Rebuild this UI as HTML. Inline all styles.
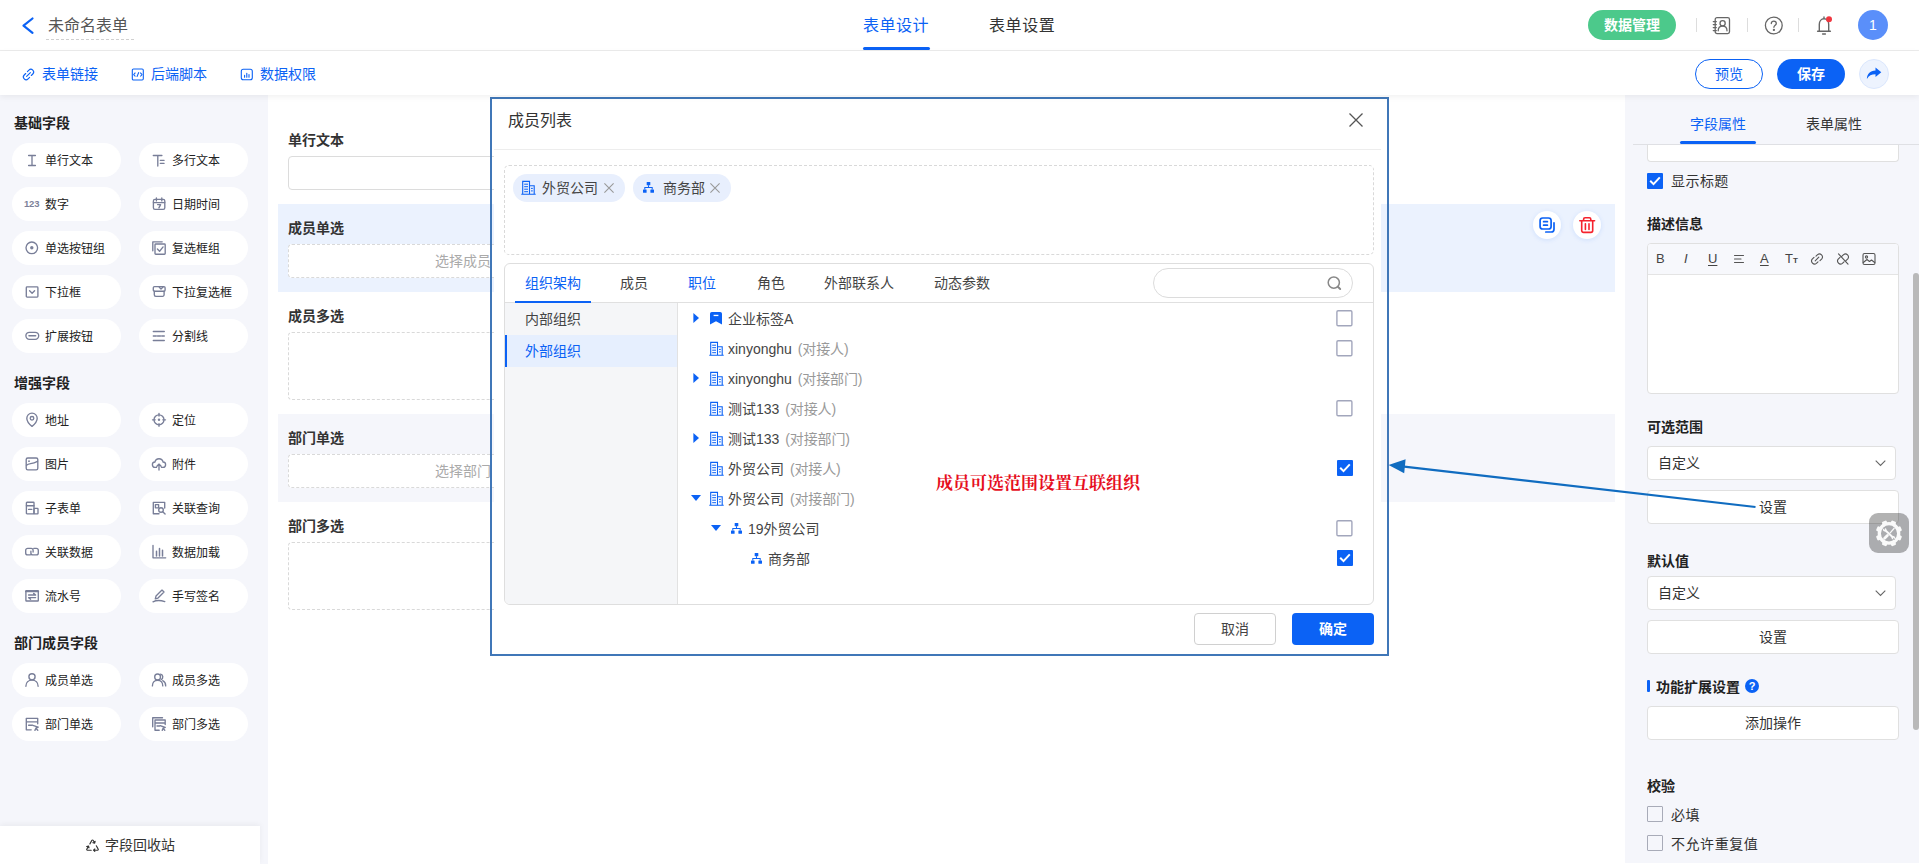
<!DOCTYPE html>
<html lang="zh-CN">
<head>
<meta charset="utf-8">
<title>表单设计</title>
<style>
*{box-sizing:border-box;margin:0;padding:0}
html,body{width:1919px;height:864px;overflow:hidden;background:#fff}
body{font-family:"Liberation Sans","Noto Sans CJK SC",sans-serif;font-size:14px;color:#333;position:relative}
.abs{position:absolute}
svg{display:block;overflow:visible}
/* header */
#hdr{position:absolute;left:0;top:0;width:1919px;height:51px;background:#fff;border-bottom:1px solid #ececec}
#bar{position:absolute;left:0;top:51px;width:1919px;height:44px;background:#fff;box-shadow:0 2px 6px rgba(0,0,0,.06);z-index:3}
#left{position:absolute;left:0;top:95px;width:268px;height:769px;background:#f5f6fb}
#right{position:absolute;left:1625px;top:95px;width:294px;height:768px;background:#f5f6fb}
#canvas{position:absolute;left:268px;top:95px;width:1357px;height:768px;background:#fff}
.t{position:absolute;white-space:nowrap;line-height:20px;height:20px}
.b{font-weight:bold}
.blue{color:#0b62f5}
/* left pills */
.pill{position:absolute;width:109px;height:34px;border-radius:17px;background:#fff;font-size:12px;line-height:34px;color:#222;white-space:nowrap}
.pill span{position:absolute;left:33px;top:1px}
.pill svg{position:absolute;left:13px;top:10px}
.sec{position:absolute;left:14px;font-size:14px;font-weight:bold;color:#222;line-height:20px}
/* form */
.flabel{position:absolute;left:288px;font-size:14px;font-weight:bold;color:#333;line-height:20px}
.dash{position:absolute;left:288px;width:350px;border:1px dashed #d9d9d9;border-radius:4px;background:#fff}
/* right */
.rlabel{position:absolute;left:1647px;font-size:14px;font-weight:bold;color:#222;line-height:20px}
.rbox{position:absolute;left:1647px;width:252px;height:34px;border:1px solid #e0e0e0;border-radius:4px;background:#fff;font-size:14px;line-height:32px;color:#333}
.cb{position:absolute;width:16px;height:16px;border:1px solid #a8abb8;border-radius:1px;background:#fff}
.cbx{position:absolute;width:16px;height:16px;border-radius:1px;background:#0b62f5}
</style>
</head>
<body>
<div id="hdr"></div>
<div id="bar"></div>
<div id="left"></div>
<div id="canvas"></div>
<div id="right"></div>
<!--HDR-->
<svg class="abs" style="left:21px;top:17px" width="14" height="18" viewBox="0 0 14 18"><path d="M11.5 1.5 L2.5 8.7 L11.5 15.8" fill="none" stroke="#0b62f5" stroke-width="2.2" stroke-linecap="round" stroke-linejoin="round"/></svg>
<div class="t" style="left:48px;top:15px;font-size:16px;line-height:22px;height:22px;color:#555">未命名表单</div>
<div class="abs" style="left:46px;top:39px;width:88px;border-top:1px dashed #d0d0d0"></div>
<div class="t" style="left:863px;top:15px;font-size:16px;line-height:22px;height:22px;letter-spacing:.5px;color:#0b62f5">表单设计</div>
<div class="abs" style="left:863px;top:47px;width:67px;height:3px;border-radius:2px;background:#0b62f5"></div>
<div class="t" style="left:989px;top:15px;font-size:16px;line-height:22px;height:22px;letter-spacing:.6px;color:#333">表单设置</div>
<div class="abs" style="left:1588px;top:10px;width:88px;height:30px;border-radius:15px;background:#4cc98b;color:#fff;font-size:14px;font-weight:bold;line-height:30px;text-align:center">数据管理</div>
<div class="abs" style="left:1696px;top:18px;width:1px;height:14px;background:#ddd"></div>
<div class="abs" style="left:1747px;top:18px;width:1px;height:14px;background:#ddd"></div>
<div class="abs" style="left:1798px;top:18px;width:1px;height:14px;background:#ddd"></div>
<svg class="abs" style="left:1712px;top:16px" width="20" height="20" viewBox="0 0 20 20" fill="none" stroke="#666" stroke-width="1.3" stroke-linecap="round" stroke-linejoin="round"><rect x="3.2" y="1.6" width="14.3" height="16" rx="1.8"/><path d="M1.2 5.6h3.2M1.2 8.6h3.2M1.2 11.6h3.2M1.2 14.6h3.2" stroke-width="1.1"/><circle cx="10.6" cy="7.3" r="2.6"/><path d="M6.2 14.8c0-3 1.9-4.6 4.4-4.6s4.4 1.600 4.4 4.600"/></svg>
<svg class="abs" style="left:1764px;top:16px" width="20" height="20" viewBox="0 0 20 20" fill="none" stroke="#666" stroke-width="1.3" stroke-linecap="round" stroke-linejoin="round"><circle cx="9.800" cy="9.500" r="8.400"/><path d="M7.300 7.600c0-1.500 1.100-2.500 2.500-2.500s2.500 1 2.500 2.300c0 1.700-2.400 1.900-2.400 3.900"/><circle cx="9.900" cy="13.900" r=".5" fill="#666"/></svg>
<svg class="abs" style="left:1814px;top:14px" width="22" height="22" viewBox="0 0 22 22" fill="none" stroke="#666" stroke-width="1.4" stroke-linecap="round" stroke-linejoin="round"><path d="M3.600 17.300h12.800M5.300 17.300v-7.100c0-3.100 2-5.400 4.700-5.400s4.700 2.300 4.700 5.400v7.100M8.600 20h2.800M10 4.600V3"/><circle cx="15" cy="5.200" r="3" fill="#f0363f" stroke="none"/></svg>
<div class="abs" style="left:1858px;top:10px;width:30px;height:30px;border-radius:15px;background:#5a8ffa;color:#fff;font-size:14px;line-height:30px;text-align:center">1</div>
<!--BAR-->
<div style="position:absolute;left:0;top:51px;width:1919px;height:45px;z-index:4">
<svg class="abs" style="left:22px;top:17px" width="13" height="13" viewBox="0 0 13 13" fill="none" stroke="#0b62f5" stroke-width="1.100" stroke-linecap="round"><path d="M5.400 3.600l1.500-1.500a2.700 2.700 0 0 1 3.900 3.900l-1.500 1.500M7.600 9.400l-1.500 1.500a2.700 2.700 0 0 1-3.900-3.900l1.500-1.500M4.600 8.400l3.800-3.800"/></svg>
<div class="t blue" style="left:42px;top:13px">表单链接</div>
<svg class="abs" style="left:131px;top:17px" width="13" height="13" viewBox="0 0 13 13" fill="none" stroke="#0b62f5" stroke-width="1.100" stroke-linejoin="round"><rect x="1.300" y="1" width="11" height="11" rx="1.200"/><path d="M4.400 4.700L2.700 6.600l1.700 1.900M5.900 8.900l1.900-4.600M9.300 4.700l1.700 1.900l-1.700 1.900"/></svg>
<div class="t blue" style="left:151px;top:13px">后端脚本</div>
<svg class="abs" style="left:240px;top:17px" width="13" height="13" viewBox="0 0 13 13" fill="none" stroke="#0b62f5" stroke-width="1.100" stroke-linecap="round"><rect x="1.300" y="1.300" width="11" height="10.400" rx="2"/><path d="M4.600 7.200v2M6.800 5.200v4M9 6.500v2.700"/></svg>
<div class="t blue" style="left:260px;top:13px">数据权限</div>
<div class="abs" style="left:1695px;top:8px;width:68px;height:30px;border-radius:15px;border:1px solid #0b62f5;color:#0b62f5;font-size:14px;line-height:28px;text-align:center;background:#fff">预览</div>
<div class="abs" style="left:1777px;top:8px;width:68px;height:30px;border-radius:15px;background:#0b62f5;color:#fff;font-size:14px;font-weight:bold;line-height:30px;text-align:center">保存</div>
<div class="abs" style="left:1859px;top:8px;width:30px;height:30px;border-radius:15px;background:#edf3fe;border:1px solid #dbe7fd"></div>
<svg class="abs" style="left:1866px;top:16px" width="16" height="14" viewBox="0 0 16 14"><path d="M9.500 .6L15.300 5.300L9.500 10V7.200C5.500 7.200 2.800 8.600 .9 12C.9 7.200 4 3.600 9.500 3.400Z" fill="#0b62f5"/></svg>
</div>
<!--LEFT-->
<div class="sec" style="top:113px">基础字段</div>
<div class="pill" style="left:12px;top:143px"><svg width="14" height="14" viewBox="0 0 14 14" fill="none" stroke="#787e98" stroke-width="1.350" stroke-linecap="round" stroke-linejoin="round"><path d="M3.600 2.500h6.800M7 2.500v10M3.600 12.500h6.800"/></svg><span>单行文本</span></div>
<div class="pill" style="left:139px;top:143px"><svg width="14" height="14" viewBox="0 0 14 14" fill="none" stroke="#787e98" stroke-width="1.350" stroke-linecap="round" stroke-linejoin="round"><path d="M1.300 2.500h8.600M5.800 2.500v10.500M8.300 7.300h3.800M8.300 10.300h3.800"/></svg><span>多行文本</span></div>
<div class="pill" style="left:12px;top:187px"><b style="position:absolute;left:12px;top:11px;font-size:9.500px;line-height:12px;letter-spacing:-.2px;color:#7b8199;font-family:'Liberation Sans',sans-serif">123</b><span>数字</span></div>
<div class="pill" style="left:139px;top:187px"><svg width="14" height="14" viewBox="0 0 14 14" fill="none" stroke="#787e98" stroke-width="1.350" stroke-linecap="round" stroke-linejoin="round"><rect x="1.400" y="2.400" width="11.400" height="10" rx="1.600"/><path d="M4.400 .9v3M9.800 .9v3M1.400 5.600h11.400M5.600 7.600h3l-1.700 3.300" /></svg><span>日期时间</span></div>
<div class="pill" style="left:12px;top:231px"><svg width="14" height="14" viewBox="0 0 14 14" fill="none" stroke="#787e98" stroke-width="1.350" stroke-linecap="round" stroke-linejoin="round"><circle cx="6.800" cy="6.800" r="5.800"/><circle cx="6.800" cy="6.800" r="1.700" fill="#7b8199" stroke="none"/></svg><span>单选按钮组</span></div>
<div class="pill" style="left:139px;top:231px"><svg width="14" height="14" viewBox="0 0 14 14" fill="none" stroke="#787e98" stroke-width="1.350" stroke-linecap="round" stroke-linejoin="round"><path d="M.8 9.800V.8h9.400"/><rect x="3" y="3" width="10.200" height="10.200" rx=".8"/><path d="M5.400 8l2.200 2.200l3.500-4.300"/></svg><span>复选框组</span></div>
<div class="pill" style="left:12px;top:275px"><svg width="14" height="14" viewBox="0 0 14 14" fill="none" stroke="#787e98" stroke-width="1.350" stroke-linecap="round" stroke-linejoin="round"><rect x="1.300" y="1.900" width="11.600" height="10.200" rx=".8"/><path d="M4.600 5.700l2.500 2.500l2.500-2.500"/></svg><span>下拉框</span></div>
<div class="pill" style="left:139px;top:275px"><svg width="14" height="14" viewBox="0 0 14 14" fill="none" stroke="#787e98" stroke-width="1.350" stroke-linecap="round" stroke-linejoin="round"><rect x="1.300" y="1.600" width="11.800" height="4.600" rx="1.200"/><path d="M2.300 6.200v3.600a1.500 1.500 0 0 0 1.500 1.500h6.800a1.500 1.500 0 0 0 1.500-1.500v-3.600M7.300 2.300l1.700 1.700l2.300-2.300"/></svg><span>下拉复选框</span></div>
<div class="pill" style="left:12px;top:319px"><svg width="14" height="14" viewBox="0 0 14 14" fill="none" stroke="#787e98" stroke-width="1.350" stroke-linecap="round" stroke-linejoin="round"><rect x=".9" y="3.300" width="12.800" height="7" rx="3.500"/><path d="M4 6.800h6.600" stroke-width="1.600"/></svg><span>扩展按钮</span></div>
<div class="pill" style="left:139px;top:319px"><svg width="14" height="14" viewBox="0 0 14 14" fill="none" stroke="#787e98" stroke-width="1.350" stroke-linecap="round" stroke-linejoin="round"><path d="M1.300 2.500h11M1.300 11.500h11"/><path d="M1.300 7h11" stroke-dasharray="3 1.200"/></svg><span>分割线</span></div>
<div class="sec" style="top:373px">增强字段</div>
<div class="pill" style="left:12px;top:403px"><svg width="14" height="14" viewBox="0 0 14 14" fill="none" stroke="#787e98" stroke-width="1.350" stroke-linecap="round" stroke-linejoin="round"><path d="M7 13.400C7 13.400 1.800 9.300 1.800 5.300a5.200 5.200 0 0 1 10.400 0C12.200 9.300 7 13.400 7 13.400z"/><circle cx="7" cy="5.300" r="1.800"/></svg><span>地址</span></div>
<div class="pill" style="left:139px;top:403px"><svg width="14" height="14" viewBox="0 0 14 14" fill="none" stroke="#787e98" stroke-width="1.350" stroke-linecap="round" stroke-linejoin="round"><circle cx="7" cy="6.800" r="5"/><path d="M7 .3v2.700M7 10.600v2.700M.5 6.800h2.700M10.800 6.800h2.700"/><circle cx="7" cy="6.800" r="1.200" fill="#7b8199" stroke="none"/></svg><span>定位</span></div>
<div class="pill" style="left:12px;top:447px"><svg width="14" height="14" viewBox="0 0 14 14" fill="none" stroke="#787e98" stroke-width="1.350" stroke-linecap="round" stroke-linejoin="round"><rect x="1.200" y="1" width="11.600" height="11.800" rx="1.600"/><path d="M1.500 8.300C4.500 5.500 6 7.800 12.500 4.300"/><circle cx="4" cy="4.200" r=".9" fill="#7b8199" stroke="none"/></svg><span>图片</span></div>
<div class="pill" style="left:139px;top:447px"><svg width="14" height="14" viewBox="0 0 14 14" fill="none" stroke="#787e98" stroke-width="1.350" stroke-linecap="round" stroke-linejoin="round"><path d="M4.500 10.400h-1.200a2.700 2.700 0 0 1-.4-5.400a4.200 4.200 0 0 1 8.200 0a2.700 2.700 0 0 1-.4 5.400h-1.200M7 13v-5.600M4.900 9.200l2.100-2.100l2.100 2.100"/></svg><span>附件</span></div>
<div class="pill" style="left:12px;top:491px"><svg width="14" height="14" viewBox="0 0 14 14" fill="none" stroke="#787e98" stroke-width="1.350" stroke-linecap="round" stroke-linejoin="round"><rect x="1.400" y="1.200" width="7.600" height="11.600" rx=".6"/><path d="M1.400 4.700h7.600M3.600 8.400h3.200"/><rect x="9" y="7.400" width="4" height="5.400" rx=".5"/></svg><span>子表单</span></div>
<div class="pill" style="left:139px;top:491px"><svg width="14" height="14" viewBox="0 0 14 14" fill="none" stroke="#787e98" stroke-width="1.350" stroke-linecap="round" stroke-linejoin="round"><path d="M12.700 7V1.300H1.300v11.400H7"/><rect x="3.400" y="3.600" width="3.200" height="3.200"/><circle cx="9" cy="9" r="2.300"/><path d="M10.700 10.700l2.400 2.400"/></svg><span>关联查询</span></div>
<div class="pill" style="left:12px;top:535px"><svg width="14" height="14" viewBox="0 0 14 14" fill="none" stroke="#787e98" stroke-width="1.350" stroke-linecap="round" stroke-linejoin="round"><path d="M5.200 9.900H2.700a2 2 0 0 1-2-2V5.300a2 2 0 0 1 2-2h3.400a2 2 0 0 1 2 2v1.700M8.800 3.300h2.500a2 2 0 0 1 2 2v2.600a2 2 0 0 1-2 2H7.900a2 2 0 0 1-2-2V6.200"/></svg><span>关联数据</span></div>
<div class="pill" style="left:139px;top:535px"><svg width="14" height="14" viewBox="0 0 14 14" fill="none" stroke="#787e98" stroke-width="1.350" stroke-linecap="round" stroke-linejoin="round"><path d="M1 .5v12.300h12.700"/><path d="M4.500 6.300v4.700M7.500 3.600v7.400M10.500 5.200v5.800" stroke-width="1.500"/></svg><span>数据加载</span></div>
<div class="pill" style="left:12px;top:579px"><svg width="14" height="14" viewBox="0 0 14 14" fill="none" stroke="#787e98" stroke-width="1.350" stroke-linecap="round" stroke-linejoin="round"><rect x=".9" y="1.700" width="12.400" height="10.300" rx=".5"/><path d="M.9 2.300h12.400" stroke-width="1.800"/><path d="M3.600 6h7M8.600 4.400l2 1.600M3.600 8.600h7M3.600 8.600l2 1.600"/></svg><span>流水号</span></div>
<div class="pill" style="left:139px;top:579px"><svg width="14" height="14" viewBox="0 0 14 14" fill="none" stroke="#787e98" stroke-width="1.350" stroke-linecap="round" stroke-linejoin="round"><path d="M3.300 9.800l.7-2.700l6-6l2 2l-6 6zM1 12.800c3.500-1.700 7.500-1.600 11.800-.2"/></svg><span>手写签名</span></div>
<div class="sec" style="top:633px">部门成员字段</div>
<div class="pill" style="left:12px;top:663px"><svg width="14" height="14" viewBox="0 0 14 14" fill="none" stroke="#787e98" stroke-width="1.350" stroke-linecap="round" stroke-linejoin="round"><circle cx="7" cy="3.800" r="3.100"/><path d="M.9 13.300c0-3.700 2.600-6.200 6.100-6.200s6.100 2.500 6.100 6.200"/></svg><span>成员单选</span></div>
<div class="pill" style="left:139px;top:663px"><svg width="14" height="14" viewBox="0 0 14 14" fill="none" stroke="#787e98" stroke-width="1.350" stroke-linecap="round" stroke-linejoin="round"><circle cx="5.600" cy="3.900" r="2.900"/><path d="M.4 12.900c0-3.400 2.200-5.700 5.200-5.700s5.200 2.300 5.200 5.700M8.600 1.200a2.900 2.900 0 0 1 .6 5.400M10.700 7.700c1.800.8 3 2.700 3 5.200"/></svg><span>成员多选</span></div>
<div class="pill" style="left:12px;top:707px"><svg width="14" height="14" viewBox="0 0 14 14" fill="none" stroke="#787e98" stroke-width="1.350" stroke-linecap="round" stroke-linejoin="round"><path d="M6.200 12.800H1.300V1.300h11.400v5.400M1.300 4.800h11.400M3.600 8.200h3.600"/><path d="M7.800 8.300l5.400 1.900l-2.300 1l1.900 2.100M10.900 11.200l-1 2.200z"/></svg><span>部门单选</span></div>
<div class="pill" style="left:139px;top:707px"><svg width="14" height="14" viewBox="0 0 14 14" fill="none" stroke="#787e98" stroke-width="1.350" stroke-linecap="round" stroke-linejoin="round"><path d="M.7 9.800V.7h9.800"/><path d="M7.200 13.200H3V3h10.200v4.500M3 6h10.200M5 9h2.600"/><path d="M8.200 8.700l5 1.800l-2.100.9l1.700 1.900M11.100 11.400l-.9 2z"/></svg><span>部门多选</span></div>
<div class="abs" style="left:0;top:826px;width:260px;height:38px;background:#fff;box-shadow:0 -2px 6px rgba(0,0,0,.05)"></div>
<svg class="abs" style="left:84.500px;top:837.500px" width="15" height="14" viewBox="0 0 15 14" fill="none" stroke="#333" stroke-width="1.150" stroke-linecap="round" stroke-linejoin="round"><path d="M4.900 5.900L6.900 2.300a.7 .7 0 0 1 1.200 0L9.700 5M10.100 3.300l-.4 1.800l-1.800-.4M11.300 7.800l1.900 3.300a.7 .7 0 0 1-.6 1.100H8.600M9.800 11l-1.300 1.200l1.300 1.200M6.200 12.200H2.400a.7 .7 0 0 1-.6-1.100L3.500 8.100M1.700 8.500l1.800-.5l.5 1.800"/></svg>
<div class="t" style="left:105px;top:835px;font-size:14px;color:#333">字段回收站</div>
<!--FORM-->
<div class="flabel" style="top:130px">单行文本</div>
<div class="abs" style="left:288px;top:156px;width:350px;height:34px;border:1px solid #dcdcdc;border-radius:4px;background:#fff"></div>
<div class="abs" style="left:278px;top:204px;width:1337px;height:88px;background:#ebf2fe"></div>
<div class="flabel" style="top:218px">成员单选</div>
<div class="dash" style="top:244px;height:34px"></div>
<div class="t" style="left:435px;top:251px;color:#aaa">选择成员</div>
<div class="abs" style="left:1533px;top:211px;width:28px;height:28px;border-radius:14px;background:#fff;box-shadow:0 1px 5px rgba(11,98,245,.12)"></div>
<svg class="abs" style="left:1539px;top:217px" width="17" height="17" viewBox="0 0 17 17" fill="none" stroke="#0b62f5" stroke-width="1.700" stroke-linecap="round" stroke-linejoin="round"><rect x="1.100" y="1" width="11" height="11" rx="2.600"/><path d="M4.600 4.700h3.800M4.600 8.200h3.800"/><path d="M15 5.800v6.400a2.800 2.800 0 0 1-2.800 2.800H6.800"/></svg>
<div class="abs" style="left:1573px;top:211px;width:28px;height:28px;border-radius:14px;background:#fff;box-shadow:0 1px 5px rgba(11,98,245,.12)"></div>
<svg class="abs" style="left:1579px;top:217px" width="17" height="17" viewBox="0 0 17 17" fill="none" stroke="#f5222d" stroke-width="1.600" stroke-linecap="round" stroke-linejoin="round"><path d="M.8 3.700h14.800M4.600 3.500V2.200a1.500 1.500 0 0 1 1.500-1.500h4.200a1.500 1.500 0 0 1 1.500 1.500v1.300M2.700 4v9.600a1.800 1.800 0 0 0 1.800 1.800h7.400a1.800 1.800 0 0 0 1.800-1.800V4M6.400 6.800v5.600M10 6.800v5.600"/></svg>
<div class="flabel" style="top:306px">成员多选</div>
<div class="dash" style="top:332px;height:68px"></div>
<div class="abs" style="left:278px;top:414px;width:1337px;height:88px;background:#f5f6fb"></div>
<div class="flabel" style="top:428px">部门单选</div>
<div class="dash" style="top:454px;height:34px"></div>
<div class="t" style="left:435px;top:461px;color:#aaa">选择部门</div>
<div class="flabel" style="top:516px">部门多选</div>
<div class="dash" style="top:542px;height:68px"></div>
<!--RIGHT-->
<div class="t" style="left:1690px;top:114px;color:#0b62f5">字段属性</div>
<div class="t" style="left:1806px;top:114px;color:#333">表单属性</div>
<div class="abs" style="left:1633px;top:144px;width:286px;height:1px;background:#dfe0e4"></div>
<div class="abs" style="left:1680px;top:141px;width:76px;height:3px;border-radius:2px;background:#0b62f5"></div>
<div class="abs" style="left:1647px;top:145px;width:252px;height:17px;border:1px solid #e0e0e0;border-top:none;border-radius:0 0 4px 4px;background:#fff"></div>
<div class="cbx" style="left:1647px;top:173px"></div><svg class="abs" style="left:1649px;top:176px" width="12" height="10" viewBox="0 0 12 10" fill="none" stroke="#fff" stroke-width="2"><path d="M1.200 4.800l3.300 3.300L10.800 1.400"/></svg>
<div class="t" style="left:1671px;top:171px;color:#333;letter-spacing:.45px">显示标题</div>
<div class="rlabel" style="top:214px">描述信息</div>
<div class="abs" style="left:1647px;top:243px;width:252px;height:151px;border:1px solid #e0e0e0;border-radius:4px;background:#fff;overflow:hidden"><div class="abs" style="left:0;top:0;width:250px;height:31px;background:#f7f8fc;border-bottom:1px solid #e4e4e4"></div></div>
<div class="t" style="left:1656px;top:249px;font-size:13px;font-family:'Liberation Sans',sans-serif;color:#444">B</div>
<div class="t" style="left:1684px;top:249px;font-size:13px;font-style:italic;font-family:'Liberation Sans',sans-serif;color:#444">I</div>
<div class="t" style="left:1708px;top:249px;font-size:13px;font-family:'Liberation Sans',sans-serif;color:#444;text-decoration:underline;text-underline-offset:2px">U</div>
<svg class="abs" style="left:1732.0px;top:252.0px" width="14" height="14" viewBox="0 0 14 14" fill="none" stroke="#555" stroke-width="1.100" stroke-linecap="round" stroke-linejoin="round" ><path d="M2.500 3.500h9M2.500 7h6.500M2.500 10.500h9"/></svg>
<div class="t" style="left:1760px;top:249px;font-size:13px;font-family:'Liberation Sans',sans-serif;color:#444;text-decoration:underline;text-underline-offset:2px">A</div>
<div class="t" style="left:1785px;top:249px;font-size:13px;font-family:'Liberation Sans',sans-serif;color:#444">T<span style="font-size:8px;font-weight:bold">T</span></div>
<svg class="abs" style="left:1810.0px;top:252.0px" width="14" height="14" viewBox="0 0 14 14" fill="none" stroke="#555" stroke-width="1.100" stroke-linecap="round" stroke-linejoin="round" ><path d="M6 4.200l1.600-1.600a3 3 0 0 1 4.200 4.200l-1.800 1.800M8 9.800l-1.600 1.600a3 3 0 0 1-4.200-4.200l1.800-1.800M5.200 8.800l3.600-3.600"/></svg>
<svg class="abs" style="left:1836.0px;top:252.0px" width="14" height="14" viewBox="0 0 14 14" fill="none" stroke="#555" stroke-width="1.100" stroke-linecap="round" stroke-linejoin="round" ><path d="M6 4.200l1.600-1.600a3 3 0 0 1 4.200 4.200l-1.800 1.800M8 9.800l-1.600 1.600a3 3 0 0 1-4.200-4.200l1.800-1.800M2.500 1.800l9.500 10.400"/></svg>
<svg class="abs" style="left:1862.0px;top:252.0px" width="14" height="14" viewBox="0 0 14 14" fill="none" stroke="#555" stroke-width="1.100" stroke-linecap="round" stroke-linejoin="round" ><rect x="1" y="1.500" width="12" height="11" rx="1.500"/><circle cx="4.500" cy="5" r="1.100"/><path d="M1.300 10.500l3.700-3l2.500 2l2-1.500l3.200 2.500"/></svg>
<div class="rlabel" style="top:417px">可选范围</div>
<div class="abs" style="left:1647px;top:446px;width:249px;height:34px;border:1px solid #e0e0e0;border-radius:4px;background:#fff"></div><div class="t" style="left:1658px;top:453px;color:#333">自定义</div><svg class="abs" style="left:1875px;top:460px" width="11" height="7" viewBox="0 0 11 7" fill="none" stroke="#666" stroke-width="1.100"><path d="M.7 .7l4.800 4.800L10.300 .7"/></svg>
<div class="abs" style="left:1647px;top:490px;width:252px;height:34px;border:1px solid #e0e0e0;border-radius:4px;background:#fff;text-align:center;line-height:32px;color:#333">设置</div>
<div class="rlabel" style="top:551px">默认值</div>
<div class="abs" style="left:1647px;top:576px;width:249px;height:34px;border:1px solid #e0e0e0;border-radius:4px;background:#fff"></div><div class="t" style="left:1658px;top:583px;color:#333">自定义</div><svg class="abs" style="left:1875px;top:590px" width="11" height="7" viewBox="0 0 11 7" fill="none" stroke="#666" stroke-width="1.100"><path d="M.7 .7l4.800 4.800L10.300 .7"/></svg>
<div class="abs" style="left:1647px;top:620px;width:252px;height:34px;border:1px solid #e0e0e0;border-radius:4px;background:#fff;text-align:center;line-height:32px;color:#333">设置</div>
<div class="abs" style="left:1647px;top:680px;width:3px;height:12px;border-radius:1px;background:#0b62f5"></div>
<div class="rlabel" style="left:1656px;top:677px">功能扩展设置</div>
<div class="abs" style="left:1745px;top:679px;width:14px;height:14px;border-radius:7px;background:#0b62f5;color:#fff;font-size:11px;font-weight:bold;line-height:14px;text-align:center;font-family:'Liberation Sans',sans-serif">?</div>
<div class="abs" style="left:1647px;top:706px;width:252px;height:34px;border:1px solid #e0e0e0;border-radius:4px;background:#fff;text-align:center;line-height:32px;color:#333">添加操作</div>
<div class="rlabel" style="top:776px">校验</div>
<div class="cb" style="left:1647px;top:806px;background:transparent"></div><div class="t" style="left:1671px;top:805px;color:#333;letter-spacing:.55px">必填</div>
<div class="cb" style="left:1647px;top:835px;background:transparent"></div><div class="t" style="left:1671px;top:834px;color:#333;letter-spacing:.55px">不允许重复值</div>
<div class="abs" style="left:1869px;top:513px;width:40px;height:40px;border-radius:9px;background:rgba(0,0,0,.3);z-index:8"></div>
<svg class="abs" style="left:1869px;top:513px;z-index:8" width="40" height="40" viewBox="-20 -20 40 40"><g transform="translate(0 .4)" fill="#fafafa"><circle r="9.700" fill="none" stroke="#fafafa" stroke-width="3.300"/><rect x="-2.500" y="-13.200" width="5" height="3.600" rx="1.200" transform="rotate(22.5)"/><rect x="-2.500" y="-13.200" width="5" height="3.600" rx="1.200" transform="rotate(67.5)"/><rect x="-2.500" y="-13.200" width="5" height="3.600" rx="1.200" transform="rotate(112.5)"/><rect x="-2.500" y="-13.200" width="5" height="3.600" rx="1.200" transform="rotate(157.5)"/><rect x="-2.500" y="-13.200" width="5" height="3.600" rx="1.200" transform="rotate(202.5)"/><rect x="-2.500" y="-13.200" width="5" height="3.600" rx="1.200" transform="rotate(247.5)"/><rect x="-2.500" y="-13.200" width="5" height="3.600" rx="1.200" transform="rotate(292.5)"/><rect x="-2.500" y="-13.200" width="5" height="3.600" rx="1.200" transform="rotate(337.5)"/><path d="M-4 -3.400L4 4" stroke="#fafafa" stroke-width="2" fill="none"/><circle cx="-4.300" cy="-3.700" r="1.800"/><circle cx="4.300" cy="4.300" r="1.800"/><path d="M-6.300 -5.700l2.100 .1l.1 2.100z M6.300 6.300l-2.100-.1l-.1-2.100z" fill="#a9a9ab"/><path d="M5.400 -5.400L1 -.2" stroke="#fafafa" stroke-width="1.200" fill="none"/><path d="M-1.600 2L-4.400 4.800" stroke="#fafafa" stroke-width="2.800" stroke-linecap="round" fill="none"/></g></svg>
<div class="abs" style="left:1913px;top:273px;width:6px;height:457px;border-radius:3px;background:#b9b9b9"></div>
<!--MODAL-->
<div class="abs" style="left:494px;top:99px;width:887px;height:555px;background:#fff"></div>
<div class="t" style="left:508px;top:109px;font-size:16px;line-height:24px;height:24px;color:#333">成员列表</div>
<svg class="abs" style="left:1349px;top:113px" width="14" height="14" viewBox="0 0 14 14" fill="none" stroke="#555" stroke-width="1.300"><path d="M.5 .5l13 13M13.500 .5l-13 13"/></svg>
<div class="abs" style="left:494px;top:149px;width:887px;height:1px;background:#ededed"></div>
<div class="abs" style="left:504px;top:165px;width:870px;height:90px;border:1px dashed #d9d9d9;border-radius:5px"></div>
<div class="abs" style="left:513px;top:174px;width:112px;height:28px;border-radius:14px;background:#e8effd"></div>
<svg class="abs" style="left:521px;top:180px" width="15" height="15" viewBox="0 0 15 15" fill="none" stroke="#0b62f5" stroke-width="1.100"><path d="M.3 14.200h14.400M1.700 14.200V1.400h6.800v12.800M8.500 5.800h4.700v8.400"/><path d="M3.200 4.200h3.800M3.200 6.700h3.800M3.200 9.200h3.800M3.200 11.700h3.800M10 8.400h1.800M10 10.900h1.800" stroke-width="1"/></svg>
<div class="t" style="left:542px;top:178px;color:#444">外贸公司</div>
<svg class="abs" style="left:604px;top:183px" width="10" height="10" viewBox="0 0 10 10" fill="none" stroke="#999" stroke-width="1.100"><path d="M.4 .4l9.200 9.200M9.600 .4L.4 9.600"/></svg>
<div class="abs" style="left:633px;top:174px;width:98px;height:28px;border-radius:14px;background:#e8effd"></div>
<svg class="abs" style="left:643px;top:182px" width="11" height="11" viewBox="0 0 11 11" fill="#0b62f5"><rect x="3.700" y="0" width="3.600" height="3.300" rx=".5"/><rect x="0" y="7.400" width="3.600" height="3.400" rx=".5"/><rect x="7.400" y="7.400" width="3.600" height="3.400" rx=".5"/><path d="M5 3.300h1v1.800h3.700v2.300h-1V6.100H2.300v1.300h-1V5.100H5z"/></svg>
<div class="t" style="left:663px;top:178px;color:#444">商务部</div>
<svg class="abs" style="left:710px;top:183px" width="10" height="10" viewBox="0 0 10 10" fill="none" stroke="#999" stroke-width="1.100"><path d="M.4 .4l9.200 9.200M9.600 .4L.4 9.600"/></svg>
<div class="abs" style="left:504px;top:263px;width:870px;height:342px;border:1px solid #dedede;border-radius:6px;background:#fff;overflow:hidden"><div class="abs" style="left:0;top:39px;width:173px;height:302px;background:#f5f6f8;border-right:1px solid #e2e2e2"></div><div class="abs" style="left:0;top:38px;width:870px;height:1px;background:#e0e0e0"></div><div class="abs" style="left:0;top:71px;width:172px;height:32px;background:#e6effe"></div><div class="abs" style="left:0;top:71px;width:2px;height:32px;background:#0b62f5"></div></div>
<div class="t" style="left:525px;top:273px;color:#0b62f5">组织架构</div>
<div class="t" style="left:620px;top:273px;color:#444">成员</div>
<div class="t" style="left:688px;top:273px;color:#0b62f5">职位</div>
<div class="t" style="left:757px;top:273px;color:#444">角色</div>
<div class="t" style="left:824px;top:273px;color:#444">外部联系人</div>
<div class="t" style="left:934px;top:273px;color:#444">动态参数</div>
<div class="abs" style="left:515px;top:301px;width:76px;height:2px;background:#0b62f5"></div>
<div class="abs" style="left:1153px;top:268px;width:200px;height:30px;border:1px solid #dcdcdc;border-radius:15px;background:#fff"></div>
<svg class="abs" style="left:1326px;top:275px" width="16" height="16" viewBox="0 0 16 16" fill="none" stroke="#888" stroke-width="1.500" stroke-linecap="round"><circle cx="7.800" cy="7.600" r="5.600"/><path d="M11.800 11.800l2.400 2.200" stroke-width="1.900"/></svg>
<div class="t" style="left:525px;top:309px;color:#444">内部组织</div>
<div class="t" style="left:525px;top:341px;color:#0b62f5">外部组织</div>
<svg class="abs" style="left:693px;top:313px" width="6" height="10" viewBox="0 0 6 10"><path d="M.4 0L6 5L.4 10z" fill="#0b62f5"/></svg>
<svg class="abs" style="left:710px;top:312px" width="12" height="13" viewBox="0 0 12 13"><path d="M1.800 0h8.400a1.800 1.800 0 0 1 1.800 1.800V12.600L6 9.300L0 12.600V1.800A1.800 1.800 0 0 1 1.800 0z" fill="#0b62f5"/><rect x="3.600" y="2.800" width="4.800" height="1.300" fill="#fff"/></svg>
<div class="t" style="left:728px;top:309px;color:#444">企业标签A</div>
<svg class="abs" style="left:1335px;top:309px" width="19" height="19" viewBox="0 0 19 19"><rect x="1.900" y="1.700" width="15" height="15" rx="1.200" fill="#fff" stroke="#a2a6bc" stroke-width="1.400"/></svg>
<svg class="abs" style="left:709px;top:341px" width="15" height="15" viewBox="0 0 15 15" fill="none" stroke="#0b62f5" stroke-width="1.100"><path d="M.3 14.200h14.400M1.700 14.200V1.400h6.800v12.800M8.500 5.800h4.700v8.400"/><path d="M3.200 4.200h3.800M3.200 6.700h3.800M3.200 9.200h3.800M3.200 11.700h3.800M10 8.400h1.800M10 10.900h1.800" stroke-width="1"/></svg>
<div class="t" style="left:728px;top:339px;color:#444">xinyonghu<span style="color:#999;margin-left:6px;letter-spacing:-.15px">(对接人)</span></div>
<svg class="abs" style="left:1335px;top:339px" width="19" height="19" viewBox="0 0 19 19"><rect x="1.900" y="1.700" width="15" height="15" rx="1.200" fill="#fff" stroke="#a2a6bc" stroke-width="1.400"/></svg>
<svg class="abs" style="left:693px;top:373px" width="6" height="10" viewBox="0 0 6 10"><path d="M.4 0L6 5L.4 10z" fill="#0b62f5"/></svg>
<svg class="abs" style="left:709px;top:371px" width="15" height="15" viewBox="0 0 15 15" fill="none" stroke="#0b62f5" stroke-width="1.100"><path d="M.3 14.200h14.400M1.700 14.200V1.400h6.800v12.800M8.500 5.800h4.700v8.400"/><path d="M3.200 4.200h3.800M3.200 6.700h3.800M3.200 9.200h3.800M3.200 11.700h3.800M10 8.400h1.800M10 10.900h1.800" stroke-width="1"/></svg>
<div class="t" style="left:728px;top:369px;color:#444">xinyonghu<span style="color:#999;margin-left:6px;letter-spacing:-.15px">(对接部门)</span></div>
<svg class="abs" style="left:709px;top:401px" width="15" height="15" viewBox="0 0 15 15" fill="none" stroke="#0b62f5" stroke-width="1.100"><path d="M.3 14.200h14.400M1.700 14.200V1.400h6.800v12.800M8.500 5.800h4.700v8.400"/><path d="M3.200 4.200h3.800M3.200 6.700h3.800M3.200 9.200h3.800M3.200 11.700h3.800M10 8.400h1.800M10 10.900h1.800" stroke-width="1"/></svg>
<div class="t" style="left:728px;top:399px;color:#444">测试133<span style="color:#999;margin-left:6px;letter-spacing:-.15px">(对接人)</span></div>
<svg class="abs" style="left:1335px;top:399px" width="19" height="19" viewBox="0 0 19 19"><rect x="1.900" y="1.700" width="15" height="15" rx="1.200" fill="#fff" stroke="#a2a6bc" stroke-width="1.400"/></svg>
<svg class="abs" style="left:693px;top:433px" width="6" height="10" viewBox="0 0 6 10"><path d="M.4 0L6 5L.4 10z" fill="#0b62f5"/></svg>
<svg class="abs" style="left:709px;top:431px" width="15" height="15" viewBox="0 0 15 15" fill="none" stroke="#0b62f5" stroke-width="1.100"><path d="M.3 14.200h14.400M1.700 14.200V1.400h6.800v12.800M8.500 5.800h4.700v8.400"/><path d="M3.200 4.200h3.800M3.200 6.700h3.800M3.200 9.200h3.800M3.200 11.700h3.800M10 8.400h1.800M10 10.900h1.800" stroke-width="1"/></svg>
<div class="t" style="left:728px;top:429px;color:#444">测试133<span style="color:#999;margin-left:6px;letter-spacing:-.15px">(对接部门)</span></div>
<svg class="abs" style="left:709px;top:461px" width="15" height="15" viewBox="0 0 15 15" fill="none" stroke="#0b62f5" stroke-width="1.100"><path d="M.3 14.200h14.400M1.700 14.200V1.400h6.800v12.800M8.500 5.800h4.700v8.400"/><path d="M3.200 4.200h3.800M3.200 6.700h3.800M3.200 9.200h3.800M3.200 11.700h3.800M10 8.400h1.800M10 10.900h1.800" stroke-width="1"/></svg>
<div class="t" style="left:728px;top:459px;color:#444">外贸公司<span style="color:#999;margin-left:6px;letter-spacing:-.15px">(对接人)</span></div>
<div class="cbx" style="left:1337px;top:460px"></div><svg class="abs" style="left:1339px;top:463px" width="12" height="10" viewBox="0 0 12 10" fill="none" stroke="#fff" stroke-width="2"><path d="M1.200 4.800l3.300 3.300L10.800 1.400"/></svg>
<svg class="abs" style="left:691px;top:495px" width="10" height="6" viewBox="0 0 10 6"><path d="M0 0h10L5 6z" fill="#0b62f5"/></svg>
<svg class="abs" style="left:709px;top:491px" width="15" height="15" viewBox="0 0 15 15" fill="none" stroke="#0b62f5" stroke-width="1.100"><path d="M.3 14.200h14.400M1.700 14.200V1.400h6.800v12.800M8.500 5.800h4.700v8.400"/><path d="M3.200 4.200h3.800M3.200 6.700h3.800M3.200 9.200h3.800M3.200 11.700h3.800M10 8.400h1.800M10 10.900h1.800" stroke-width="1"/></svg>
<div class="t" style="left:728px;top:489px;color:#444">外贸公司<span style="color:#999;margin-left:6px;letter-spacing:-.15px">(对接部门)</span></div>
<svg class="abs" style="left:711px;top:525px" width="10" height="6" viewBox="0 0 10 6"><path d="M0 0h10L5 6z" fill="#0b62f5"/></svg>
<svg class="abs" style="left:731px;top:523px" width="11" height="11" viewBox="0 0 11 11" fill="#0b62f5"><rect x="3.700" y="0" width="3.600" height="3.300" rx=".5"/><rect x="0" y="7.400" width="3.600" height="3.400" rx=".5"/><rect x="7.400" y="7.400" width="3.600" height="3.400" rx=".5"/><path d="M5 3.300h1v1.800h3.700v2.300h-1V6.100H2.300v1.300h-1V5.100H5z"/></svg>
<div class="t" style="left:748px;top:519px;color:#444">19外贸公司</div>
<svg class="abs" style="left:1335px;top:519px" width="19" height="19" viewBox="0 0 19 19"><rect x="1.900" y="1.700" width="15" height="15" rx="1.200" fill="#fff" stroke="#a2a6bc" stroke-width="1.400"/></svg>
<svg class="abs" style="left:751px;top:553px" width="11" height="11" viewBox="0 0 11 11" fill="#0b62f5"><rect x="3.700" y="0" width="3.600" height="3.300" rx=".5"/><rect x="0" y="7.400" width="3.600" height="3.400" rx=".5"/><rect x="7.400" y="7.400" width="3.600" height="3.400" rx=".5"/><path d="M5 3.300h1v1.800h3.700v2.300h-1V6.100H2.300v1.300h-1V5.100H5z"/></svg>
<div class="t" style="left:768px;top:549px;color:#444">商务部</div>
<div class="cbx" style="left:1337px;top:550px"></div><svg class="abs" style="left:1339px;top:553px" width="12" height="10" viewBox="0 0 12 10" fill="none" stroke="#fff" stroke-width="2"><path d="M1.200 4.800l3.300 3.300L10.800 1.400"/></svg>
<div class="abs" style="left:1194px;top:613px;width:82px;height:32px;border:1px solid #d0d0d0;border-radius:4px;background:#fff;color:#444;text-align:center;line-height:30px">取消</div>
<div class="abs" style="left:1292px;top:613px;width:82px;height:32px;border-radius:4px;background:#0b62f5;color:#fff;font-weight:bold;text-align:center;line-height:32px">确定</div>
<div class="abs" style="left:490px;top:97px;width:899px;height:559px;border:2px solid #4077b8"></div>
<!--ANNOT-->
<div class="t" style="left:936px;top:472px;font-family:'Liberation Serif','Noto Serif CJK SC',serif;font-weight:bold;font-size:17px;line-height:24px;height:24px;color:#e60f1e;z-index:9">成员可选范围设置互联组织</div>
<svg class="abs" style="left:1380px;top:450px;z-index:9" width="390" height="70" viewBox="1380 450 390 70"><path d="M1755.500 507L1402 466.300" stroke="#106cc0" stroke-width="2.200" fill="none"/><path d="M1388.600 465L1405.600 459.200L1404.200 473.200z" fill="#106cc0"/></svg>
</body>
</html>
